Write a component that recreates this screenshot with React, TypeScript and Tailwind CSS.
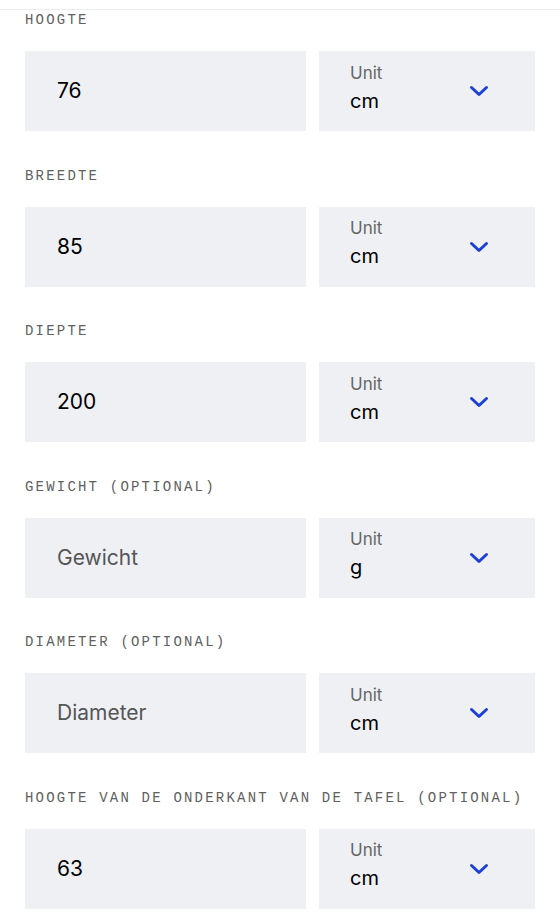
import React from "react";

type Field = {
  label: string;
  value?: string;
  placeholder: string;
  unit: string;
};

const fields: Field[] = [
  { label: "HOOGTE", value: "76", placeholder: "Hoogte", unit: "cm" },
  { label: "BREEDTE", value: "85", placeholder: "Breedte", unit: "cm" },
  { label: "DIEPTE", value: "200", placeholder: "Diepte", unit: "cm" },
  { label: "GEWICHT (OPTIONAL)", placeholder: "Gewicht", unit: "g" },
  { label: "DIAMETER (OPTIONAL)", placeholder: "Diameter", unit: "cm" },
  {
    label: "HOOGTE VAN DE ONDERKANT VAN DE TAFEL (OPTIONAL)",
    value: "63",
    placeholder: "Hoogte",
    unit: "cm",
  },
];

const Chevron = () => (
  <svg width="20" height="12" viewBox="0 0 20 12" fill="none">
    <path
      d="M2.5 2.5 L10 9.5 L17.5 2.5"
      stroke="#1c3fd6"
      strokeWidth="3"
      strokeLinecap="round"
      strokeLinejoin="round"
    />
  </svg>
);

const DimensionRow = ({ field }: { field: Field }) => {
  return (
    <div className="mb-[34.5px]">
      <p className="font-['Liberation_Mono',monospace] text-[14px] leading-[20px] tracking-[2.2px] text-[#606060] whitespace-nowrap">
        {field.label}
      </p>
      <div className="mt-[21px] flex gap-[13px]">
        <div className="flex h-[80px] flex-1 items-center bg-[#eff0f4] pl-[32px]">
          {field.value ? (
            <span className="text-[21px] text-black">{field.value}</span>
          ) : (
            <span className="text-[21px] text-[#555555]">{field.placeholder}</span>
          )}
        </div>
        <div className="flex h-[80px] w-[216px] items-center justify-between bg-[#eff0f4] pl-[31px] pr-[46px]">
          <div className="mb-[8px] flex flex-col">
            <span className="text-[17px] leading-[22px] text-[#666666]">Unit</span>
            <span className="mt-[5px] text-[20px] leading-[24px] text-black">{field.unit}</span>
          </div>
          <Chevron />
        </div>
      </div>
    </div>
  );
};

const App = () => {
  return (
    <div className="min-h-screen w-[560px] bg-white font-['Inter',sans-serif]">
      <div className="h-[9px]" />
      <div className="border-t border-[#ececec] px-[25px]">
        {fields.map((f) => (
          <DimensionRow key={f.label} field={f} />
        ))}
      </div>
    </div>
  );
};

export default App;
